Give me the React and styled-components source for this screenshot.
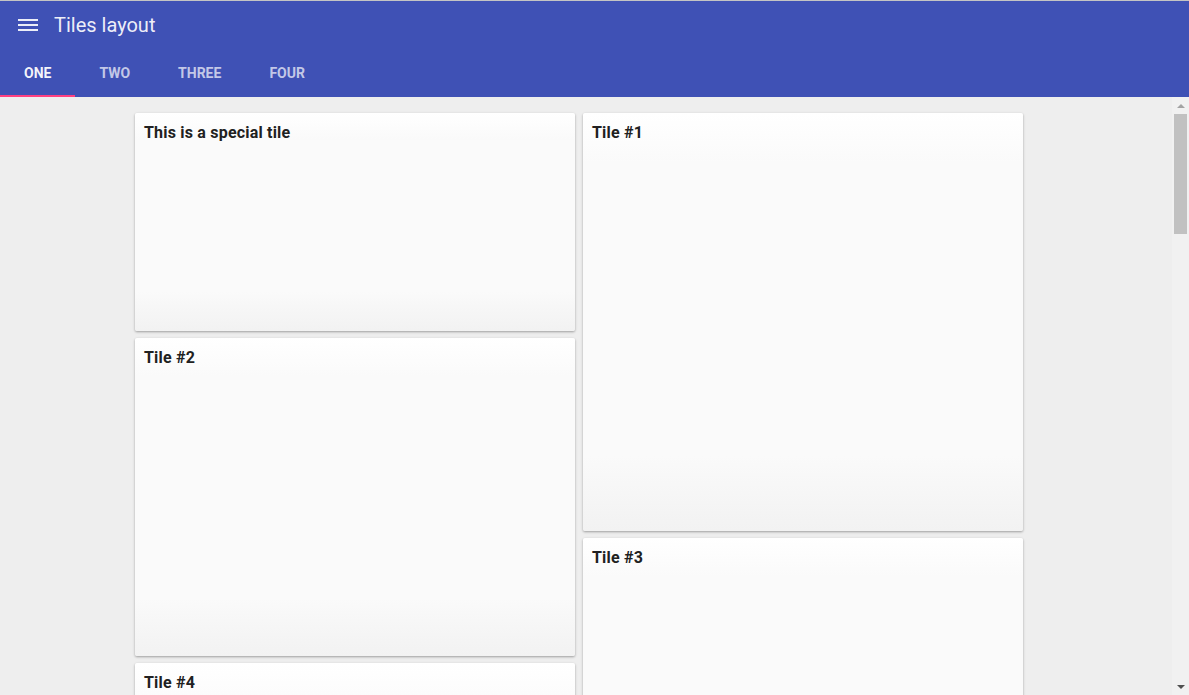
import React from 'react';
import styled, { createGlobalStyle } from 'styled-components';

const Global = createGlobalStyle`
	html, body {
		margin: 0;
		height: 100%;
		overflow: hidden;
		font-family: Roboto, 'Liberation Sans', sans-serif;
		background: #eeeeee;
	}
`;

const Page = styled.div`
	display: flex;
	flex-direction: column;
	height: 100vh;
`;

const Header = styled.header`
	background-color: #3f51b5;
	border-top: 1px solid #c4c4c4;
	color: white;
	flex: none;
`;

const Toolbar = styled.div`
	height: 48px;
	display: flex;
	align-items: center;
	padding: 0 17px;
	gap: 15px;
	h1 {
		margin: 0;
		font-size: 20px;
		font-weight: 400;
		color: rgba(255, 255, 255, 0.92);
	}
`;

const Tabs = styled.nav`
	height: 48px;
	display: flex;
`;

const Tab = styled.div`
	position: relative;
	padding: 0 24px;
	display: flex;
	align-items: center;
	font-size: 14px;
	font-weight: 700;
	text-transform: uppercase;
	color: ${(p) => (p.active ? 'rgba(255,255,255,0.95)' : 'rgba(255,255,255,0.7)')};
	&::after {
		content: '';
		display: ${(p) => (p.active ? 'block' : 'none')};
		position: absolute;
		left: 0;
		right: 0;
		bottom: 0;
		height: 2px;
		background: #ff4081;
	}
`;

const Body = styled.div`
	flex: 1;
	display: flex;
	min-height: 0;
`;

const Scroller = styled.main`
	flex: 1;
	overflow: hidden;
`;

const ScrollBar = styled.div`
	width: 17px;
	flex: none;
	background: #f1f1f1;
	display: flex;
	flex-direction: column;
	align-items: center;
`;

const Arrow = styled.div`
	height: 17px;
	width: 17px;
	display: flex;
	align-items: center;
	justify-content: center;
	&::before {
		content: '';
		width: 0;
		height: 0;
		border-left: 4px solid transparent;
		border-right: 4px solid transparent;
		${(p) =>
			p.down
				? 'border-top: 4px solid #505050;'
				: 'border-bottom: 4px solid #a3a3a3;'}
	}
`;

const Track = styled.div`
	flex: 1;
	width: 17px;
	display: flex;
	justify-content: center;
`;

const Thumb = styled.div`
	width: 13px;
	height: 120px;
	background: #c1c1c1;
`;

const Grid = styled.div`
	display: flex;
	gap: 8px;
	padding: 16px 0 16px 135px;
`;

const Column = styled.div`
	width: 440px;
	display: flex;
	flex-direction: column;
	gap: 7px;
`;

const Tile = styled.div`
	height: ${(p) => p.h}px;
	border-radius: 2px;
	background: linear-gradient(to bottom, #ffffff 0%, #fafafa 12%, #fafafa 82%, #f2f2f2 100%);
	box-shadow: 0 1px 3px rgba(0, 0, 0, 0.22), 0 1px 2px rgba(0, 0, 0, 0.14);
	h3 {
		margin: 0;
		padding: 10px 9px;
		font-size: 16px;
		font-weight: 700;
		letter-spacing: 0.2px;
		color: #212121;
	}
`;

const Menu = () => (
	<svg width="22" height="14" viewBox="0 0 22 14">
		<rect x="1" y="1" width="20" height="2" fill="rgba(255,255,255,0.9)" />
		<rect x="1" y="6" width="20" height="2" fill="rgba(255,255,255,0.9)" />
		<rect x="1" y="11" width="20" height="2" fill="rgba(255,255,255,0.9)" />
	</svg>
);

const left = [
	{ title: 'This is a special tile', h: 218 },
	{ title: 'Tile #2', h: 318 },
	{ title: 'Tile #4', h: 418 },
	{ title: 'Tile #6', h: 318 },
];

const right = [
	{ title: 'Tile #1', h: 418 },
	{ title: 'Tile #3', h: 318 },
	{ title: 'Tile #5', h: 418 },
];

const App = () => (
	<Page>
		<Global />
		<Header>
			<Toolbar>
				<Menu />
				<h1>Tiles layout</h1>
			</Toolbar>
			<Tabs>
				<Tab active>One</Tab>
				<Tab>Two</Tab>
				<Tab>Three</Tab>
				<Tab>Four</Tab>
			</Tabs>
		</Header>
		<Body>
			<Scroller>
				<Grid>
					<Column>
						{left.map((t) => (
							<Tile key={t.title} h={t.h}>
								<h3>{t.title}</h3>
							</Tile>
						))}
					</Column>
					<Column>
						{right.map((t) => (
							<Tile key={t.title} h={t.h}>
								<h3>{t.title}</h3>
							</Tile>
						))}
					</Column>
				</Grid>
			</Scroller>
			<ScrollBar>
				<Arrow />
				<Track>
					<Thumb />
				</Track>
				<Arrow down />
			</ScrollBar>
		</Body>
	</Page>
);

export default App;
